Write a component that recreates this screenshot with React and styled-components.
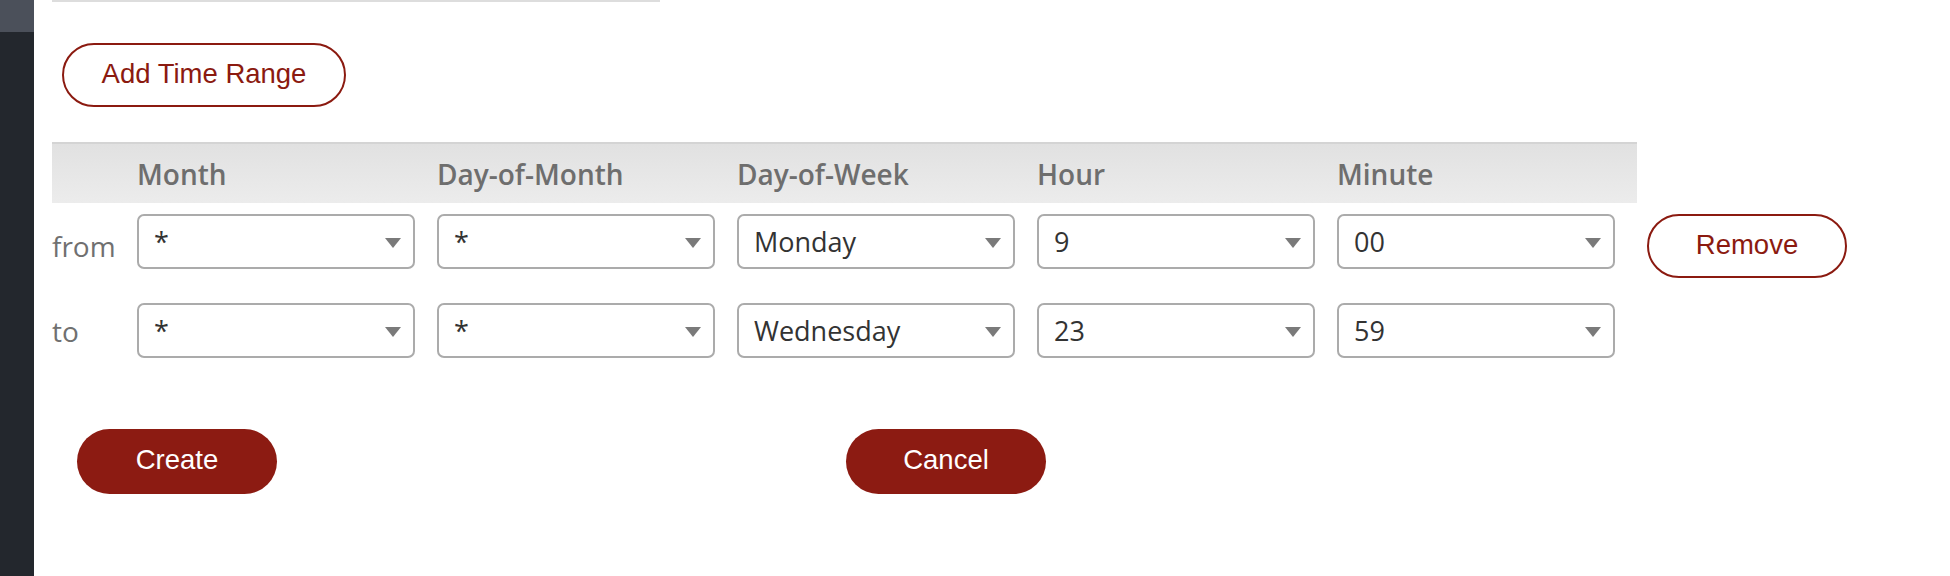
import React from 'react';
import styled, { createGlobalStyle } from 'styled-components';

const GlobalStyle = createGlobalStyle`
  html, body {
    margin: 0;
    padding: 0;
    background: #ffffff;
  }
`;

const columns = ['Month', 'Day-of-Month', 'Day-of-Week', 'Hour', 'Minute'];

const monthOptions = ['*', '1', '2', '3', '4', '5', '6', '7', '8', '9', '10', '11', '12'];
const domOptions = ['*', ...Array.from({ length: 31 }, (_, i) => String(i + 1))];
const dowOptions = ['*', 'Sunday', 'Monday', 'Tuesday', 'Wednesday', 'Thursday', 'Friday', 'Saturday'];
const hourOptions = ['*', ...Array.from({ length: 24 }, (_, i) => String(i))];
const minuteOptions = ['*', ...Array.from({ length: 60 }, (_, i) => String(i).padStart(2, '0'))];
const optionSets = [monthOptions, domOptions, dowOptions, hourOptions, minuteOptions];

const ranges = [
  { label: 'from', values: ['*', '*', 'Monday', '9', '00'], removable: true },
  { label: 'to', values: ['*', '*', 'Wednesday', '23', '59'], removable: false },
];

const App = () => {
  return (
    <React.Fragment>
      <GlobalStyle />
      <Page>
        <Sidebar>
          <SidebarTop />
        </Sidebar>
        <Main>
          <TopRule />
          <OutlineBtn wide>Add Time Range</OutlineBtn>
          <Table>
            <HeaderRow>
              <HeaderCell />
              {columns.map((c) => (
                <HeaderCell key={c}>{c}</HeaderCell>
              ))}
            </HeaderRow>
            {ranges.map((r, i) => (
              <RangeRow key={r.label} first={i === 0}>
                <RowLabel>{r.label}</RowLabel>
                {r.values.map((v, j) => (
                  <Cell key={j}>
                    <SelectWrap>
                      <Select defaultValue={v}>
                        {optionSets[j].map((o) => (
                          <option key={o} value={o}>{o}</option>
                        ))}
                      </Select>
                    </SelectWrap>
                  </Cell>
                ))}
                <ActionCell>{r.removable && <OutlineBtn>Remove</OutlineBtn>}</ActionCell>
              </RangeRow>
            ))}
          </Table>
          <Footer>
            <PrimaryBtn>Create</PrimaryBtn>
            <PrimaryBtn>Cancel</PrimaryBtn>
          </Footer>
        </Main>
      </Page>
    </React.Fragment>
  );
};

const Page = styled.div`
  display: flex;
  width: 1950px;
  height: 576px;
  overflow: hidden;
  background: #ffffff;
`;

const Sidebar = styled.aside`
  flex: 0 0 34px;
  height: 100%;
  background: #23272d;
`;

const SidebarTop = styled.div`
  height: 32px;
  background: #4b505a;
`;

const Main = styled.main`
  flex: 1;
  display: flex;
  flex-direction: column;
  align-items: flex-start;
  padding-left: 18px;
`;

const TopRule = styled.div`
  width: 608px;
  height: 2px;
  background: #dddddd;
`;

const OutlineBtn = styled.button`
  box-sizing: border-box;
  width: ${(p) => (p.wide ? '284px' : '200px')};
  height: 64px;
  margin: ${(p) => (p.wide ? '41px 0 0 10px' : '0')};
  border: 2px solid #8b1a10;
  border-radius: 32px;
  background: #ffffff;
  color: #8b1a10;
  font-family: "Liberation Sans", Arial, sans-serif;
  font-size: 27.5px;
  padding: 0 0 3px;
  cursor: pointer;
`;

const Table = styled.div`
  margin-top: 35px;
  display: flex;
  flex-direction: column;
`;

const HeaderRow = styled.div`
  box-sizing: border-box;
  display: grid;
  grid-template-columns: 85px repeat(5, 300px);
  width: 1585px;
  height: 61px;
  align-items: center;
  border-top: 2px solid #d4d4d4;
  background: linear-gradient(#e1e1e1, #ececec);
`;

const HeaderCell = styled.div`
  font-family: "Open Sans", "Noto Sans", sans-serif;
  font-size: 28px;
  font-weight: 600;
  color: #6e6e6e;
`;

const RangeRow = styled.div`
  display: grid;
  grid-template-columns: 85px repeat(5, 300px) auto;
  align-items: start;
  margin-top: ${(p) => (p.first ? '11px' : '25px')};
`;

const RowLabel = styled.div`
  align-self: center;
  font-family: "Open Sans", "Noto Sans", sans-serif;
  font-size: 28px;
  color: #707070;
`;

const Cell = styled.div`
  padding-right: 22px;
`;

const ActionCell = styled.div`
  padding-left: 10px;
`;

const SelectWrap = styled.div`
  position: relative;
  width: 278px;
  &::after {
    content: '';
    position: absolute;
    right: 14px;
    top: 24px;
    border-left: 8px solid transparent;
    border-right: 8px solid transparent;
    border-top: 10px solid #7a7a7a;
    pointer-events: none;
  }
`;

const Select = styled.select`
  box-sizing: border-box;
  appearance: none;
  -webkit-appearance: none;
  display: block;
  width: 278px;
  height: 55px;
  padding: 0 40px 0 15px;
  border: 2px solid #ababab;
  border-radius: 7px;
  background: #ffffff;
  color: #333333;
  font-family: "Open Sans", "Noto Sans", sans-serif;
  font-size: 27px;
  outline: none;
`;

const Footer = styled.div`
  display: flex;
  gap: 569px;
  margin: 71px 0 0 25px;
`;

const PrimaryBtn = styled.button`
  width: 200px;
  height: 65px;
  border: none;
  border-radius: 33px;
  background: #8c1b12;
  color: #ffffff;
  font-family: "Liberation Sans", Arial, sans-serif;
  font-size: 27.5px;
  padding: 0 0 4px;
  cursor: pointer;
`;

export default App;
